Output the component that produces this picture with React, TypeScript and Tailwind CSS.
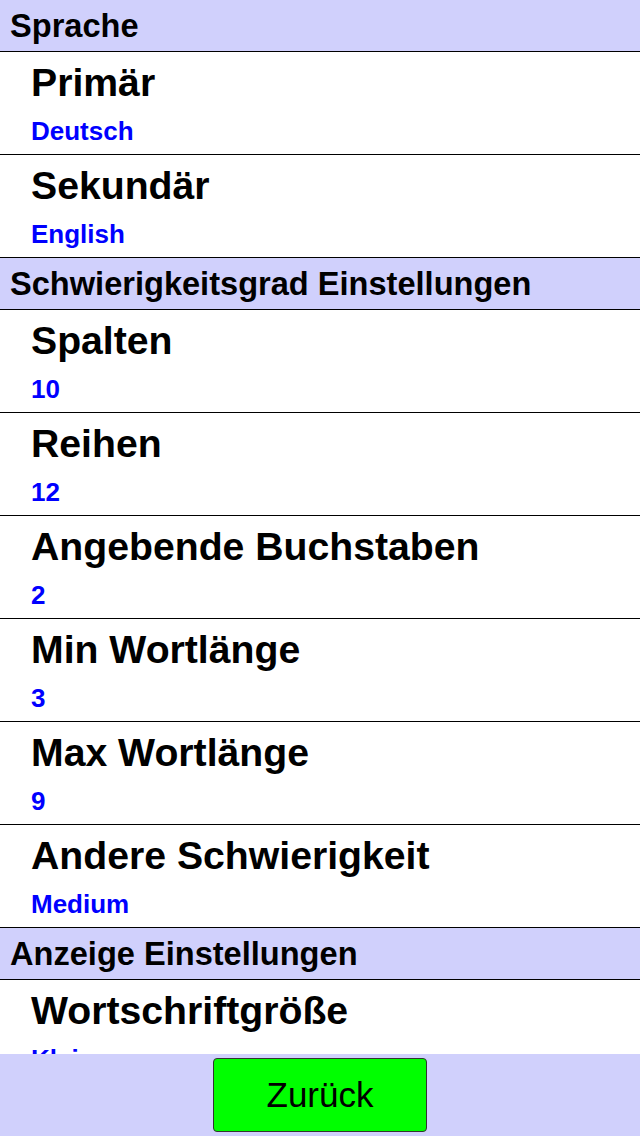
import React from "react";

type Row = { title: string; value: string };
type Section = { header: string; rows: Row[] };

const sections: Section[] = [
  {
    header: "Sprache",
    rows: [
      { title: "Primär", value: "Deutsch" },
      { title: "Sekundär", value: "English" },
    ],
  },
  {
    header: "Schwierigkeitsgrad Einstellungen",
    rows: [
      { title: "Spalten", value: "10" },
      { title: "Reihen", value: "12" },
      { title: "Angebende Buchstaben", value: "2" },
      { title: "Min Wortlänge", value: "3" },
      { title: "Max Wortlänge", value: "9" },
      { title: "Andere Schwierigkeit", value: "Medium" },
    ],
  },
  {
    header: "Anzeige Einstellungen",
    rows: [{ title: "Wortschriftgröße", value: "Klein" }],
  },
];

export default function App() {
  return (
    <div
      className="flex flex-col w-[640px] h-[1136px] bg-white overflow-hidden"
      style={{ fontFamily: '"Liberation Sans", Arial, sans-serif' }}
    >
      <div className="flex-1 overflow-hidden">
        {sections.map((s) => (
          <div key={s.header}>
            <div className="h-[52px] bg-[#d0d0fc] border-b border-black flex items-center pl-[10px]">
              <span className="text-[32.6px] leading-[38px] font-bold text-black">
                {s.header}
              </span>
            </div>
            {s.rows.map((r) => (
              <div
                key={r.title}
                className="h-[103px] border-b border-black flex flex-col pl-[31px] pt-[9px]"
              >
                <div className="text-[39.2px] leading-[44px] font-bold text-black">
                  {r.title}
                </div>
                <div className="mt-[11px] text-[26px] leading-[30px] font-bold text-[#0000ff]">
                  {r.value}
                </div>
              </div>
            ))}
          </div>
        ))}
      </div>
      <div className="h-[82px] bg-[#d0d0fc] flex items-center justify-center shrink-0">
        <button className="w-[214px] h-[74px] bg-[#00ff00] border border-[#333] rounded-[4px] text-[35px] text-black flex items-center justify-center">
          Zurück
        </button>
      </div>
    </div>
  );
}
